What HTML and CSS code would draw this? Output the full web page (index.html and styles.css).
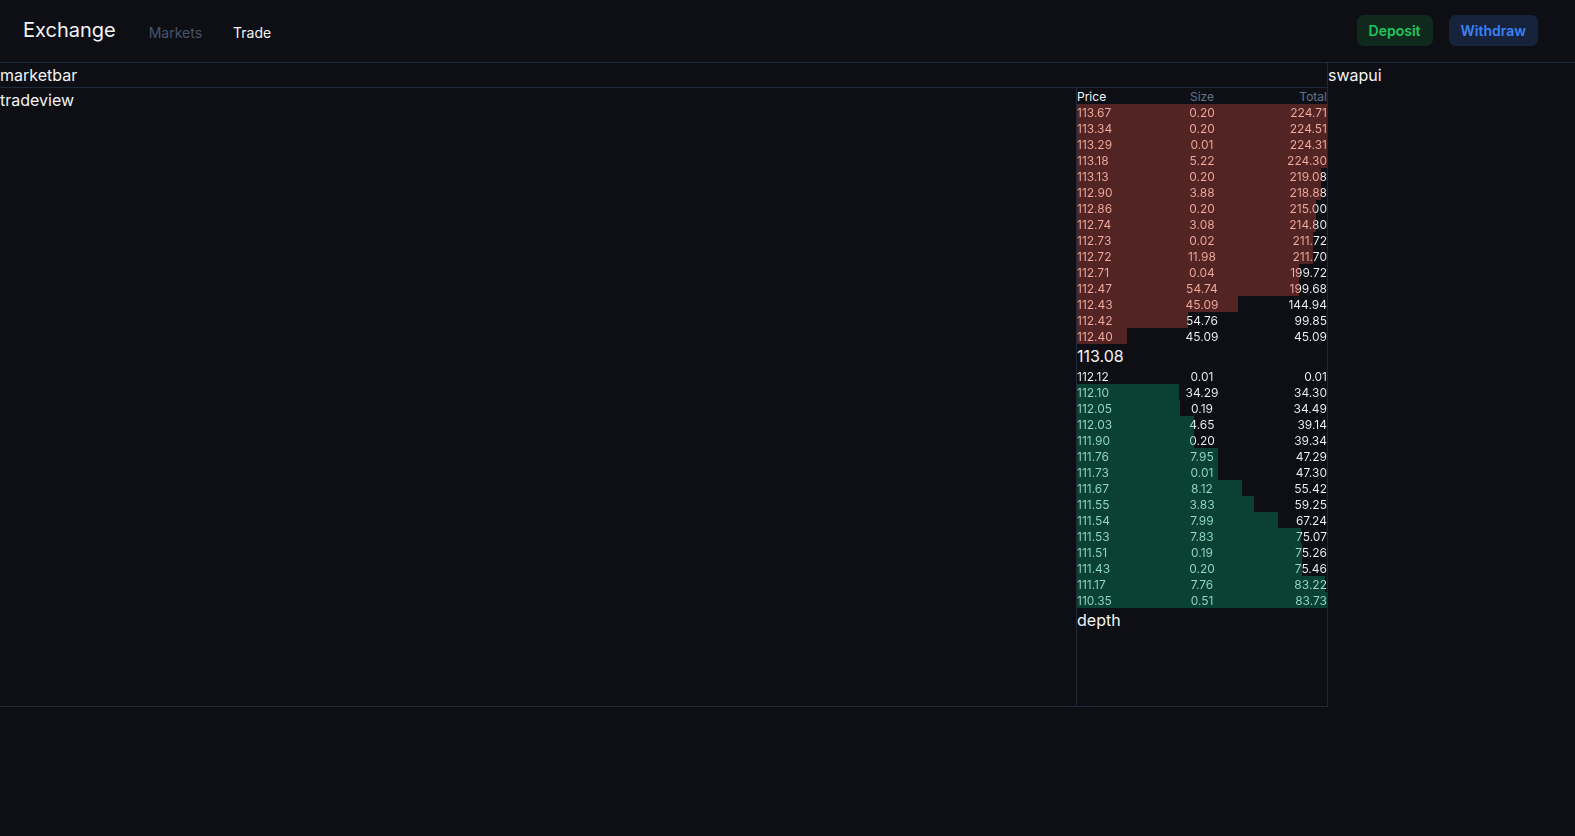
FILE: index.html
```html
<!DOCTYPE html>
<html lang="en">
<head>
<meta charset="utf-8">
<title>Exchange</title>
<link rel="stylesheet" href="styles.css">
</head>
<body>
<header class="topbar">
  <div class="brand">Exchange</div>
  <nav class="nav">
    <a class="nav-link muted">Markets</a>
    <a class="nav-link active">Trade</a>
  </nav>
  <div class="actions">
    <button class="btn btn-deposit">Deposit</button>
    <button class="btn btn-withdraw">Withdraw</button>
  </div>
</header>
<main class="layout">
  <section class="left">
    <div class="marketbar">marketbar</div>
    <div class="trade">
      <div class="tradeview">tradeview</div>
      <div class="book">
        <div class="book-head"><span>Price</span><span class="muted-col">Size</span><span class="muted-col">Total</span></div>
        <div class="side asks">
          <div class="row" style="--w:100%"><div class="cells"><span>113.67</span><span>0.20</span><span>224.71</span></div></div>
          <div class="row" style="--w:99.91%"><div class="cells"><span>113.34</span><span>0.20</span><span>224.51</span></div></div>
          <div class="row" style="--w:99.82%"><div class="cells"><span>113.29</span><span>0.01</span><span>224.31</span></div></div>
          <div class="row" style="--w:99.82%"><div class="cells"><span>113.18</span><span>5.22</span><span>224.30</span></div></div>
          <div class="row" style="--w:97.49%"><div class="cells"><span>113.13</span><span>0.20</span><span>219.08</span></div></div>
          <div class="row" style="--w:97.41%"><div class="cells"><span>112.90</span><span>3.88</span><span>218.88</span></div></div>
          <div class="row" style="--w:95.68%"><div class="cells"><span>112.86</span><span>0.20</span><span>215.00</span></div></div>
          <div class="row" style="--w:95.59%"><div class="cells"><span>112.74</span><span>3.08</span><span>214.80</span></div></div>
          <div class="row" style="--w:94.22%"><div class="cells"><span>112.73</span><span>0.02</span><span>211.72</span></div></div>
          <div class="row" style="--w:94.21%"><div class="cells"><span>112.72</span><span>11.98</span><span>211.70</span></div></div>
          <div class="row" style="--w:88.88%"><div class="cells"><span>112.71</span><span>0.04</span><span>199.72</span></div></div>
          <div class="row" style="--w:88.86%"><div class="cells"><span>112.47</span><span>54.74</span><span>199.68</span></div></div>
          <div class="row" style="--w:64.50%"><div class="cells"><span>112.43</span><span>45.09</span><span>144.94</span></div></div>
          <div class="row" style="--w:44.43%"><div class="cells"><span>112.42</span><span>54.76</span><span>99.85</span></div></div>
          <div class="row" style="--w:20.07%"><div class="cells"><span>112.40</span><span>45.09</span><span>45.09</span></div></div>
        </div>
        <div class="mid">113.08</div>
        <div class="side bids">
          <div class="row" style="--w:0.01%"><div class="cells"><span>112.12</span><span>0.01</span><span>0.01</span></div></div>
          <div class="row" style="--w:40.97%"><div class="cells"><span>112.10</span><span>34.29</span><span>34.30</span></div></div>
          <div class="row" style="--w:41.19%"><div class="cells"><span>112.05</span><span>0.19</span><span>34.49</span></div></div>
          <div class="row" style="--w:46.75%"><div class="cells"><span>112.03</span><span>4.65</span><span>39.14</span></div></div>
          <div class="row" style="--w:46.98%"><div class="cells"><span>111.90</span><span>0.20</span><span>39.34</span></div></div>
          <div class="row" style="--w:56.48%"><div class="cells"><span>111.76</span><span>7.95</span><span>47.29</span></div></div>
          <div class="row" style="--w:56.49%"><div class="cells"><span>111.73</span><span>0.01</span><span>47.30</span></div></div>
          <div class="row" style="--w:66.19%"><div class="cells"><span>111.67</span><span>8.12</span><span>55.42</span></div></div>
          <div class="row" style="--w:70.76%"><div class="cells"><span>111.55</span><span>3.83</span><span>59.25</span></div></div>
          <div class="row" style="--w:80.31%"><div class="cells"><span>111.54</span><span>7.99</span><span>67.24</span></div></div>
          <div class="row" style="--w:89.66%"><div class="cells"><span>111.53</span><span>7.83</span><span>75.07</span></div></div>
          <div class="row" style="--w:89.88%"><div class="cells"><span>111.51</span><span>0.19</span><span>75.26</span></div></div>
          <div class="row" style="--w:90.12%"><div class="cells"><span>111.43</span><span>0.20</span><span>75.46</span></div></div>
          <div class="row" style="--w:99.39%"><div class="cells"><span>111.17</span><span>7.76</span><span>83.22</span></div></div>
          <div class="row" style="--w:100%"><div class="cells"><span>110.35</span><span>0.51</span><span>83.73</span></div></div>
        </div>
        <div class="depth">depth</div>
      </div>
    </div>
  </section>
  <aside class="swapui">swapui</aside>
</main>
</body>
</html>
```
FILE: styles.css
```css
* { box-sizing: border-box; }

html, body {
  margin: 0;
  padding: 0;
  background: #0e0f14;
  color: #f3f4f6;
  font-family: Inter, "Noto Sans", "Liberation Sans", sans-serif;
}

.topbar {
  display: flex;
  align-items: center;
  height: 63px;
  padding: 0 37px 0 23px;
  border-bottom: 1px solid #1e293b;
}

.brand {
  font-size: 20px;
  line-height: 28px;
  color: #f3f4f6;
  margin-top: -2px;
}

.nav {
  display: flex;
  gap: 31px;
  margin-left: 33px;
  margin-top: 3px;
}

.nav-link {
  font-size: 14px;
  line-height: 20px;
}

.nav-link.muted { color: #475569; }
.nav-link.active { color: #f3f4f6; }

.actions {
  margin-left: auto;
  display: flex;
  gap: 16px;
  margin-top: -1px;
}

.btn {
  border: 0;
  border-radius: 7px;
  height: 31px;
  padding: 0 12px;
  font-family: inherit;
  font-size: 14px;
  font-weight: 600;
}

.btn-deposit {
  background: #0f2a1d;
  color: #22c55e;
}

.btn-withdraw {
  background: #16233b;
  color: #3b82f6;
}

.layout {
  display: grid;
  grid-template-columns: 1fr 248px;
}

.left {
  display: flex;
  flex-direction: column;
}

.marketbar {
  height: 25px;
  line-height: 24px;
  font-size: 16px;
  border-bottom: 1px solid #1e293b;
}

.trade {
  display: grid;
  grid-template-columns: 1fr 251px;
  height: 619px;
  border-bottom: 1px solid #1e293b;
}

.tradeview {
  font-size: 16px;
  line-height: 24px;
}

.book {
  border-left: 1px solid #1e293b;
  display: flex;
  flex-direction: column;
}

.book-head, .cells {
  display: grid;
  grid-template-columns: 1fr 1fr 1fr;
  font-size: 12px;
  line-height: 16px;
  height: 16px;
  padding-top: 1px;
}

.book-head span:nth-child(2), .cells span:nth-child(2) { text-align: center; }
.book-head span:nth-child(3), .cells span:nth-child(3) { text-align: right; }

.book-head { color: #f3f4f6; overflow: visible; }
.book-head .muted-col { color: #64748b; }

.row {
  height: 16px;
}

.asks .row {
  background: linear-gradient(90deg, #532424 var(--w), transparent var(--w));
}
.asks .cells {
  background: linear-gradient(90deg, #f2ab9c var(--w), #f3f4f6 var(--w));
  -webkit-background-clip: text;
  background-clip: text;
  color: transparent;
}

.bids .row {
  background: linear-gradient(90deg, #0b4035 var(--w), transparent var(--w));
}
.bids .cells {
  background: linear-gradient(90deg, #93dcc4 var(--w), #f3f4f6 var(--w));
  -webkit-background-clip: text;
  background-clip: text;
  color: transparent;
}

.mid {
  font-size: 16px;
  line-height: 24px;
}

.depth {
  font-size: 16px;
  line-height: 24px;
}

.swapui {
  border-left: 1px solid #1e293b;
  font-size: 16px;
  line-height: 24px;
}
```
